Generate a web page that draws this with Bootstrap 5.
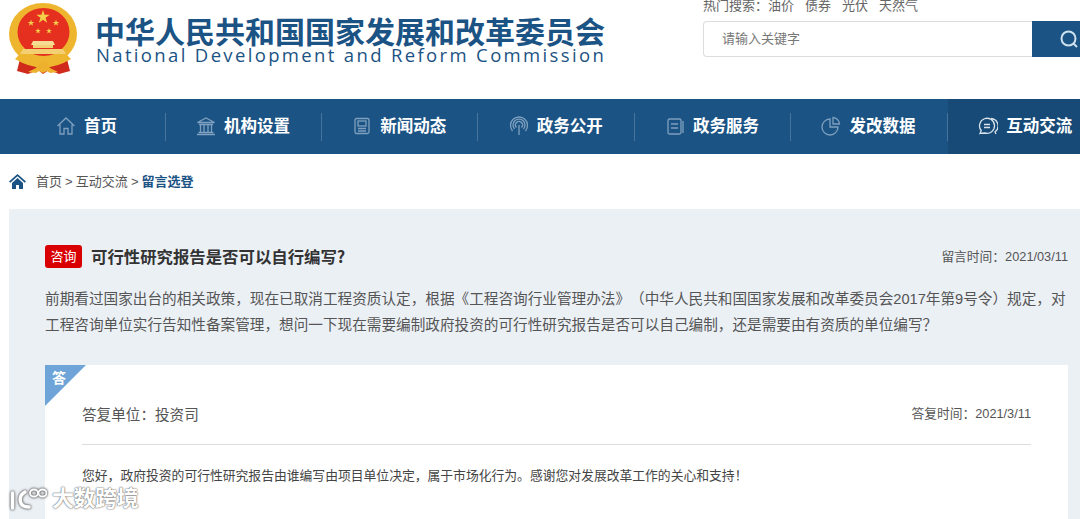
<!DOCTYPE html>
<html lang="zh-CN">
<head>
<meta charset="utf-8">
<title>留言选登</title>
<link rel="stylesheet" href="https://cdn.jsdelivr.net/npm/bootstrap@5.3.0/dist/css/bootstrap.min.css">
<style>
html,body{height:519px;overflow:hidden;background:#fff}
body{font-family:"Liberation Sans","Noto Sans CJK SC",sans-serif;color:#444;position:relative;text-spacing-trim:space-all}
.head-area{height:99px}
.emblem-box{width:95px;height:85px}
.site-cn{font-family:"Noto Sans CJK SC",sans-serif;font-weight:700;font-size:30px;line-height:30px;color:#1b5384;margin-top:15px;white-space:nowrap}
.site-en{font-family:"Open Sans",sans-serif;font-size:18.5px;line-height:20px;color:#1b5384;letter-spacing:2.35px;white-space:nowrap;margin-left:1px}
.search-zone{width:377px;margin-top:-4px}
.hot-words{font-size:13px;line-height:20px;color:#666;height:25px}
.hot-words span{margin-right:11px}
.search-field{height:36px;border:1px solid #ddd;border-right:0;border-radius:4px 0 0 4px;width:329px;padding-left:18px;font-size:13px;line-height:34px;color:#777}
.search-go{width:48px;height:36px;background:#1b5384;padding-right:2px}
.main-menu{height:55px;background:#1b5384;padding-left:9.3px;overflow:hidden}
.menu-cell{flex:0 0 156.4px;height:55px;color:#fff;font-weight:700;font-size:16.5px;white-space:nowrap;position:relative;font-family:"Noto Sans CJK SC",sans-serif;padding:0 2px 3px 0}
.menu-cell::after{content:"";position:absolute;right:0;top:14px;height:28px;width:1px;background:#46749c}
.menu-cell.last-cell::after{display:none}
.menu-cell.on-cell{background:#174a76;flex:0 0 200px;padding-right:46px}
.menu-cell svg{margin-right:8px;fill:none;stroke:#7fa0bf;stroke-width:1.3;position:relative;top:1px}
.on-cell svg{stroke:#d9e3ec}
.crumbs{height:55px;padding-left:9px;font-size:13px;color:#555}
.crumbs b{color:#1b5384}
.crumbs svg{margin-right:10px}
.crumbs span{margin-right:3.1px}
.question-panel{margin-left:9px;background:#ebf0f5;padding:36px 12px 0 36px;height:310px}
.ask-tag{width:37px;height:23px;background:#d90000;color:#fff;font-size:13px;line-height:23px;text-align:center;border-radius:3px;margin-right:9px}
.ask-title{font-size:16.4px;font-weight:700;color:#333;font-family:"Noto Sans CJK SC",sans-serif;line-height:23px}
.stamp{font-size:12.75px;color:#555}
.ask-body{font-size:14.64px;line-height:26px;color:#555;margin:18px 0 27px}
.reply-card{background:#fff;height:160px;padding:39px 37px 0 37px;position:relative}
.reply-corner{position:absolute;left:0;top:0;width:0;height:0;border-top:41px solid #6ea4d8;border-right:41px solid transparent}
.reply-mark{position:absolute;left:7px;top:4px;color:#fff;font-weight:700;font-size:14px;line-height:18px}
.reply-unit{font-size:14.6px;color:#555;line-height:22px}
.reply-line{height:1px;background:#ddd;margin:18px 0 21px}
.reply-text{font-size:12.8px;line-height:20px;color:#444}
.wm-layer{position:absolute;left:10px;bottom:7px;color:#fff;font-size:22px;font-weight:700;line-height:26px;text-shadow:0 0 2px #666,0 0 1px #666;letter-spacing:-.45px}
.wm-layer svg{margin-right:5px;filter:drop-shadow(0 0 1px #555) drop-shadow(0 0 1px #999)}
</style>
</head>
<body>
<header class="head-area d-flex justify-content-between">
  <div class="d-flex">
    <div class="emblem-box">
      <svg width="90" height="85" viewBox="0 0 90 85">
        <defs><path id="s5" d="M0-1 .225-.309.951-.309.363.118.588.809 0 .382-.588.809-.363.118-.951-.309-.225-.309z" fill="#f6cf4a"/></defs>
        <path d="M21 55 L17 71 L28 74 L38 70 L43 74 L49 70 L59 74 L70 71 L66 55Z" fill="#cf2a1c"/>
        <ellipse cx="43" cy="34" rx="34" ry="31" fill="#eeb52f"/>
        <ellipse cx="43.500" cy="32" rx="26" ry="24" fill="#e5301f"/>
        <use href="#s5" transform="translate(43 17) scale(7)"/>
        <use href="#s5" transform="translate(31 23) scale(3.500)"/>
        <use href="#s5" transform="translate(56 23) scale(3.500)"/>
        <use href="#s5" transform="translate(38 31) scale(3)"/>
        <use href="#s5" transform="translate(49 31) scale(3)"/>
        <path d="M33 41h20l2 4H31z" fill="#f7dd94"/>
        <path d="M33 45h20v3H33z" fill="#f3d173"/>
        <path d="M23 49h40l3 5H20z" fill="#f3d173"/>
        <path d="M19 55 Q43 70 67 55 L71 59 Q43 76 15 59Z" fill="#eeb52f"/>
        <path d="M28 72l8-4 3-5 4-2 4 2 3 5 8 4-8 1-3-2-4 2-4-2-3 2z" fill="#edb12d"/>
      </svg>
    </div>
    <div>
      <div class="site-cn">中华人民共和国国家发展和改革委员会</div>
      <div class="site-en">National Development and Reform Commission</div>
    </div>
  </div>
  <div class="search-zone">
    <div class="hot-words"><span>热门搜索：油价</span><span>债券</span><span>光伏</span><span>天然气</span></div>
    <div class="d-flex">
      <div class="search-field">请输入关键字</div>
      <div class="search-go d-flex align-items-center justify-content-end">
        <svg width="18" height="18" viewBox="0 0 18 18" fill="none" stroke="#cfe0ee" stroke-width="2"><circle cx="8.500" cy="8.500" r="7"/><path d="M13.500 13.500l3.500 3.500"/></svg>
      </div>
    </div>
  </div>
</header>
<nav class="main-menu d-flex">
  <div class="menu-cell d-flex align-items-center justify-content-center">
    <svg width="20" height="20" viewBox="0 0 20 20"><path d="M1.500 10L10 2l8.500 8M4 8.500V18h4v-5.500h4V18h4V8.500"/></svg>首页</div>
  <div class="menu-cell d-flex align-items-center justify-content-center">
    <svg width="20" height="20" viewBox="0 0 20 20"><path d="M1.500 6.500L10 2l8.500 4.500zM3 8.500h14M4.500 9v7M8 9v7M12 9v7M15.500 9v7M2.500 16.500h15M1 18.500h18"/></svg>机构设置</div>
  <div class="menu-cell d-flex align-items-center justify-content-center">
    <svg width="20" height="20" viewBox="0 0 20 20"><rect x="3" y="2.500" width="14" height="15" rx="1.500"/><rect x="6" y="5" width="8" height="5"/><path d="M6 12.500h8M6 15h8"/></svg>新闻动态</div>
  <div class="menu-cell d-flex align-items-center justify-content-center">
    <svg width="20" height="20" viewBox="0 0 20 20"><path d="M3.500 15A8.500 8.500 0 1 1 16.500 15M5.500 13A6 6 0 1 1 14.500 13M7.500 11.500A3.500 3.500 0 1 1 12.500 11.500M10 9v10"/></svg>政务公开</div>
  <div class="menu-cell d-flex align-items-center justify-content-center">
    <svg width="20" height="20" viewBox="0 0 20 20"><rect x="3" y="3" width="13" height="15" rx="1.500"/><path d="M6 8h7M6 12h7M18 5v12"/></svg>政务服务</div>
  <div class="menu-cell d-flex align-items-center justify-content-center">
    <svg width="20" height="20" viewBox="0 0 20 20"><path d="M9 3a8 8 0 1 0 8 8H9zM12 1.500a7 7 0 0 1 6.500 6.500H12z"/></svg>发改数据</div>
  <div class="menu-cell on-cell last-cell d-flex align-items-center justify-content-center">
    <svg width="21" height="20" viewBox="0 0 21 20"><path d="M3 17.500l1.200-3A7.500 7.500 0 1 1 8 17c-1.800 0-3.500 0-5 .5zM14 2.500A7.500 7.500 0 0 1 18 16l1 2M7 8.500h6M7 11.500h6"/></svg>互动交流</div>
</nav>
<div class="crumbs d-flex align-items-center">
  <svg width="17" height="15" viewBox="0 0 17 15"><path d="M8.500 0L17 7.500l-1.200 1.200L8.500 2.300 1.200 8.700 0 7.500zM3 9l5.500-5L14 9v6h-4v-4H7v4H3z" fill="#1b5384"/></svg>
  <span>首页</span><span>&gt;</span><span>互动交流</span><span>&gt;</span><b>留言选登</b>
</div>
<main class="question-panel">
  <div class="d-flex align-items-center">
    <div class="ask-tag">咨询</div>
    <div class="ask-title flex-grow-1">可行性研究报告是否可以自行编写?</div>
    <div class="stamp">留言时间：2021/03/11</div>
  </div>
  <p class="ask-body">前期看过国家出台的相关政策，现在已取消工程资质认定，根据《工程咨询行业管理办法》（中华人民共和国国家发展和改革委员会2017年第9号令）规定，对工程咨询单位实行告知性备案管理，想问一下现在需要编制政府投资的可行性研究报告是否可以自己编制，还是需要由有资质的单位编写？</p>
  <section class="reply-card">
    <div class="reply-corner"></div>
    <div class="reply-mark">答</div>
    <div class="d-flex justify-content-between align-items-start">
      <div class="reply-unit">答复单位：投资司</div>
      <div class="stamp">答复时间：2021/3/11</div>
    </div>
    <div class="reply-line"></div>
    <div class="reply-text">您好，政府投资的可行性研究报告由谁编写由项目单位决定，属于市场化行为。感谢您对发展改革工作的关心和支持！</div>
  </section>
</main>
<div class="wm-layer d-flex align-items-center">
  <svg width="37" height="24" viewBox="0 0 37 24" fill="none" stroke="#fff" stroke-width="3.500" stroke-linecap="round"><path d="M2.500 6v15M15 5C8 9 8 20 19 20"/><ellipse cx="24" cy="6" rx="4" ry="3.500" stroke-width="1.800"/><ellipse cx="32.500" cy="6" rx="4" ry="3.500" stroke-width="1.800"/></svg>大数跨境
</div>
<script src="https://cdn.jsdelivr.net/npm/bootstrap@5.3.0/dist/js/bootstrap.bundle.min.js"></script>
</body>
</html>
